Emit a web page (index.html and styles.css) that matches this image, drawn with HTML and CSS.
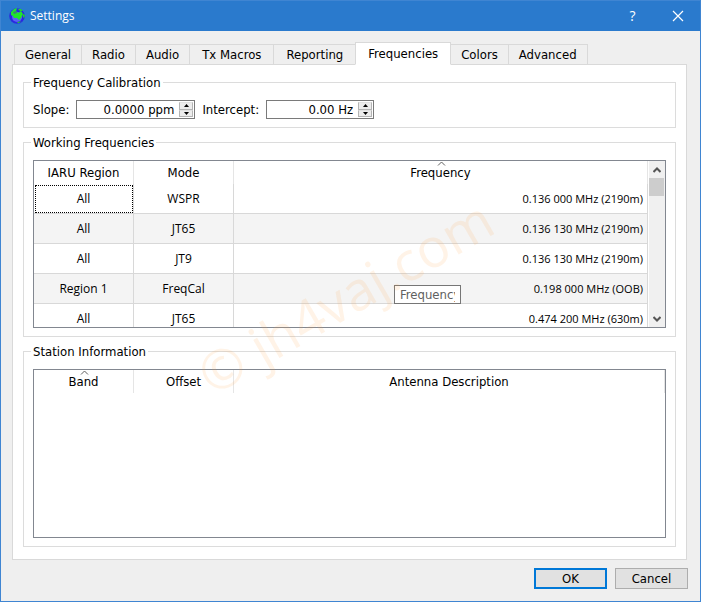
FILE: index.html
```html
<!DOCTYPE html>
<html lang="en">
<head>
<meta charset="utf-8">
<title>Settings</title>
<link rel="stylesheet" href="styles.css">
</head>
<body>
<div class="window">
  <header class="titlebar">
    <svg class="globe" width="18" height="18" viewBox="0 0 18 18" aria-hidden="true">
      <circle cx="9" cy="9" r="7.8" fill="#2a2ae0"/>
      <circle cx="9" cy="10" r="5" fill="#5a62f4"/>
      <path d="M3 5L6 2L9 1L8 4L10 6L13 4L15 7L13 11L11 13L9 11L6 11L5 9L3 8Z" fill="#1fe62c"/>
      <path d="M10 2L13 2L15 4L12 4ZM10 15L13 14L11 16L9 16ZM15 7L17 8L16 11L15 10Z" fill="#1fd62c"/>
      <path d="M5 5L8 4L9 6L6 7Z" fill="#3b7f7a"/>
    </svg>
    <h1 class="title">Settings</h1>
    <button class="caption-btn" type="button" aria-label="Help">?</button>
    <button class="caption-btn" type="button" aria-label="Close">
      <svg width="12" height="12" viewBox="0 0 12 12"><path d="M1 1L11 11M11 1L1 11" stroke="#fff" stroke-width="1.2" fill="none"/></svg>
    </button>
  </header>
  <main class="body">
    <div class="tabs" role="tablist">
      <button class="tab" type="button" role="tab">General</button>
      <button class="tab" type="button" role="tab">Radio</button>
      <button class="tab" type="button" role="tab">Audio</button>
      <button class="tab tab-long" type="button" role="tab">Tx Macros</button>
      <button class="tab tab-long" type="button" role="tab">Reporting</button>
      <button class="tab tab-active" type="button" role="tab" aria-selected="true">Frequencies</button>
      <button class="tab" type="button" role="tab">Colors</button>
      <button class="tab" type="button" role="tab">Advanced</button>
    </div>
    <section class="panel" role="tabpanel">
      <fieldset class="group">
        <legend>Frequency Calibration</legend>
        <div class="calibration">
          <label for="slope">Slope:</label>
          <div class="spin spin-wide">
            <input id="slope" type="text" value="0.0000 ppm">
            <div class="spin-buttons">
              <button type="button" aria-label="Increase slope"><svg width="5" height="3" viewBox="0 0 5 3"><path d="M0 3L2.5 0L5 3Z"/></svg></button>
              <button type="button" aria-label="Decrease slope"><svg width="5" height="3" viewBox="0 0 5 3"><path d="M0 0L2.5 3L5 0Z"/></svg></button>
            </div>
          </div>
          <label for="intercept">Intercept:</label>
          <div class="spin">
            <input id="intercept" type="text" value="0.00 Hz">
            <div class="spin-buttons">
              <button type="button" aria-label="Increase intercept"><svg width="5" height="3" viewBox="0 0 5 3"><path d="M0 3L2.5 0L5 3Z"/></svg></button>
              <button type="button" aria-label="Decrease intercept"><svg width="5" height="3" viewBox="0 0 5 3"><path d="M0 0L2.5 3L5 0Z"/></svg></button>
            </div>
          </div>
        </div>
      </fieldset>
      <fieldset class="group">
        <legend>Working Frequencies</legend>
        <div class="view view-scroll">
          <div class="viewport">
            <table class="grid">
              <colgroup><col class="col-fixed"><col class="col-fixed"><col></colgroup>
              <thead>
                <tr><th>IARU Region</th><th>Mode</th><th><svg class="sort" width="9" height="5" viewBox="0 0 9 5"><path d="M1 4.5L4.5 1L8 4.5"/></svg>Frequency</th></tr>
              </thead>
              <tbody>
                <tr><td class="focused">All</td><td>WSPR</td><td>0.136 000 MHz (2190m)</td></tr>
                <tr><td>All</td><td>JT65</td><td>0.136 130 MHz (2190m)</td></tr>
                <tr><td>All</td><td>JT9</td><td>0.136 130 MHz (2190m)</td></tr>
                <tr><td>Region 1</td><td>FreqCal</td><td>0.198 000 MHz (OOB)</td></tr>
                <tr><td>All</td><td>JT65</td><td>0.474 200 MHz (630m)</td></tr>
              </tbody>
            </table>
          </div>
          <div class="scrollbar">
            <button type="button" aria-label="Scroll up"><svg width="8" height="6" viewBox="0 0 8 6"><path d="M0.5 5L4 1.5L7.5 5"/></svg></button>
            <div class="track"><div class="thumb"></div></div>
            <button type="button" aria-label="Scroll down"><svg width="8" height="6" viewBox="0 0 8 6"><path d="M0.5 1L4 4.5L7.5 1"/></svg></button>
          </div>
          <input class="drag-label" type="text" value="Frequency" aria-label="Column" readonly>
        </div>
      </fieldset>
      <fieldset class="group group-fill">
        <legend>Station Information</legend>
        <div class="view">
          <table class="grid">
            <colgroup><col class="col-fixed"><col class="col-fixed"><col></colgroup>
            <thead>
              <tr><th><svg class="sort" width="9" height="5" viewBox="0 0 9 5"><path d="M1 4.5L4.5 1L8 4.5"/></svg>Band</th><th>Offset</th><th>Antenna Description</th></tr>
            </thead>
          </table>
        </div>
      </fieldset>
    </section>
    <footer class="actions">
      <button class="btn btn-default" type="button">OK</button>
      <button class="btn" type="button">Cancel</button>
    </footer>
  </main>
  <div class="watermark">© jh4vaj.com</div>
</div>
</body>
</html>
```
FILE: styles.css
```css
* { box-sizing: border-box; }
body {
  margin: 0;
  font: 13px/17px "DejaVu Sans Condensed", "DejaVu Sans", sans-serif;
  color: #000;
}
button, input { font: inherit; color: inherit; margin: 0; padding: 0; }
.window {
  position: relative;
  display: flex;
  flex-direction: column;
  min-height: 100vh;
  border: 1px solid #3f85d2;
  background: #efefef;
  overflow: hidden;
}
.titlebar {
  display: flex;
  align-items: center;
  height: 30px;
  padding-left: 7px;
  background: #2a7acd;
  color: #fff;
  font: 12px/16px "Open Sans", sans-serif;
}
.title { flex: 1; margin: 0 0 0 4px; font: inherit; }
.caption-btn {
  width: 45px;
  height: 30px;
  border: 0;
  background: none;
  display: flex;
  align-items: center;
  justify-content: center;
  font-size: 14px;
}
.body {
  flex: 1;
  display: flex;
  flex-direction: column;
  padding: 11px 13px 12px 11px;
}
.tabs {
  display: flex;
  align-items: flex-end;
  height: 23px;
  padding-left: 2px;
  margin-bottom: -1px;
  z-index: 1;
}
.tab {
  height: 21px;
  padding: 0 10px;
  margin-right: -1px;
  border: 1px solid #d9d9d9;
  background: #efefef;
  white-space: nowrap;
}
.tab-long { padding: 0 12px; }
.tab-active {
  height: 23px;
  padding: 0 12px;
  background: #fff;
  border-bottom-color: #fff;
  z-index: 1;
}
.panel {
  flex: 1;
  display: flex;
  flex-direction: column;
  gap: 6px;
  padding: 9px 10px 12px;
  border: 1px solid #d9d9d9;
  background: #fff;
}
.group {
  min-width: 0;
  margin: 0;
  padding: 9px 9px 8px;
  border: 1px solid #dcdcdc;
}
.group legend { margin-left: -2px; padding: 0 2px; line-height: 17px; }
.group-fill { flex: 1; }
.group-fill .view { height: 169px; }
.calibration { display: flex; align-items: center; gap: 7px; height: 19px; }
.spin {
  display: flex;
  width: 108px;
  height: 19px;
  border: 1px solid #7a7a7a;
  background: #fff;
}
.spin-wide { width: 119px; }
.spin input {
  flex: 1;
  min-width: 0;
  border: 0;
  outline: 0;
  background: none;
  text-align: right;
}
.spin-buttons { display: flex; flex-direction: column; width: 14px; margin: 1px 1px 1px 5px; }
.spin-buttons button {
  flex: 1;
  display: flex;
  align-items: center;
  justify-content: center;
  border: 1px solid #b4b4b4;
  border-top-color: #e2e2e2;
  background: #ececec;
}
.view { position: relative; border: 1px solid #828790; background: #fff; }
.view-scroll { display: flex; height: 168px; }
.viewport { flex: 1; overflow: hidden; }
.grid { width: 100%; table-layout: fixed; border-collapse: separate; border-spacing: 0; }
.col-fixed { width: 100px; }
.grid th {
  position: relative;
  height: 23px;
  padding: 0;
  border-right: 1px solid #e5e5e5;
  font-weight: normal;
}
.grid td {
  height: 30px;
  padding: 0 4px;
  border-right: 1px solid #d8d8d8;
  border-bottom: 1px solid #d8d8d8;
  text-align: center;
  font: 12px/16px "Open Sans", sans-serif;
}
.grid td:last-child { text-align: right; font-size: 11px; }
.grid tbody tr:nth-child(even) { background: #f4f4f4; }
.grid td.focused { outline: 1px dotted #000; outline-offset: -2px; }
.sort { position: absolute; top: 0; left: calc(50% - 4px); }
.sort path { fill: none; stroke: #606060; }
.scrollbar {
  display: flex;
  flex-direction: column;
  width: 17px;
  padding-right: 1px;
  border-left: 1px solid #fff;
  background: #f0f0f0;
}
.scrollbar button {
  height: 17px;
  border: 0;
  background: none;
  display: flex;
  align-items: center;
  justify-content: center;
}
.scrollbar path { fill: none; stroke: #555; stroke-width: 2; }
.track { flex: 1; }
.thumb { height: 18px; background: #cdcdcd; }
.drag-label {
  position: absolute;
  left: 360px;
  top: 124px;
  width: 67px;
  height: 19px;
  padding: 0 5px;
  border: 1px solid #767676;
  background: #fff;
  color: #606060;
}
.actions { display: flex; justify-content: flex-end; gap: 8px; margin: 8px -1px 0 0; }
.btn { width: 73px; height: 21px; border: 1px solid #adadad; background: #e1e1e1; }
.btn-default { border: 2px solid #0078d7; }
.watermark {
  position: absolute;
  left: 179px;
  top: 259px;
  font: 54px/72px "Open Sans", sans-serif;
  white-space: nowrap;
  color: rgba(255, 165, 70, 0.13);
  transform: rotate(-30deg);
  pointer-events: none;
}
```
